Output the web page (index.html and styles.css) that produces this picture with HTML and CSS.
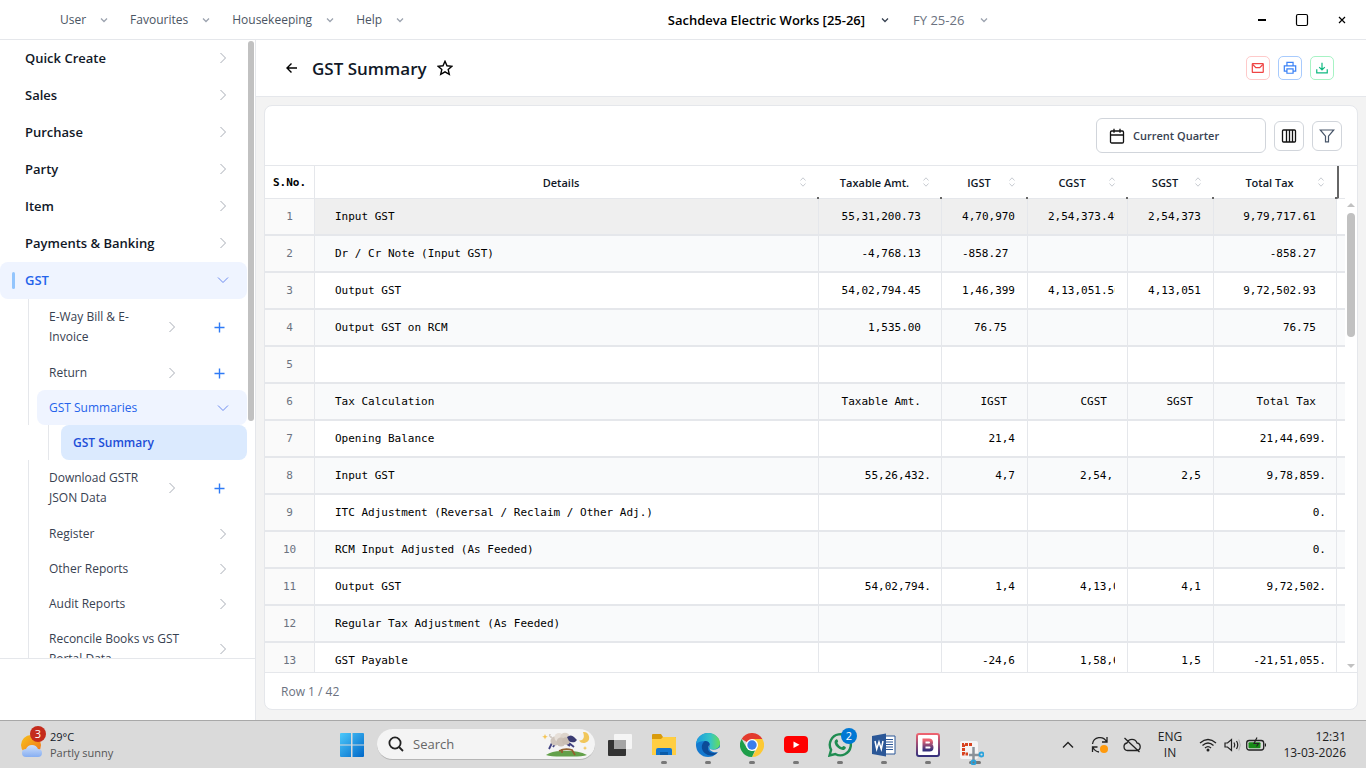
FILE: index.html
```html
<!DOCTYPE html>
<html lang="en">
<head>
  <meta charset="UTF-8">
  <title>GST Summary</title>
  <link rel="stylesheet" href="styles.css">
</head>
<body>

<!-- Shared icons -->
<svg class="sprite" aria-hidden="true">
  <symbol id="chev-right" viewBox="0 0 16 16"><path d="M5.5 3l5 5-5 5"/></symbol>
  <symbol id="chev-down" viewBox="0 0 16 16"><path d="M3 5.500l5 5 5-5"/></symbol>
  <symbol id="caret" viewBox="0 0 8 8"><path d="M1 2.500l3 3 3-3"/></symbol>
  <symbol id="plus" viewBox="0 0 16 16"><path d="M8.500 3.500v10M3.500 8.500h10"/></symbol>
  <symbol id="sort" viewBox="0 0 8 12"><path d="M1.500 4.500L4 1.800l2.500 2.700M1.500 7.500L4 10.200l2.500-2.700"/></symbol>
</svg>

<header class="titlebar">
  <nav class="menu">
    <button>User <svg class="caret"><use href="#caret"/></svg></button>
    <button>Favourites <svg class="caret"><use href="#caret"/></svg></button>
    <button>Housekeeping <svg class="caret"><use href="#caret"/></svg></button>
    <button>Help <svg class="caret"><use href="#caret"/></svg></button>
  </nav>
  <div class="menu company">
    <button class="firm">Sachdeva Electric Works [25-26] <svg class="caret"><use href="#caret"/></svg></button>
    <button class="year">FY 25-26 <svg class="caret"><use href="#caret"/></svg></button>
  </div>
  <div class="window-controls">
    <button aria-label="Minimize"><svg viewBox="0 0 20 20"><path d="M6 10h8" stroke-width="2"/></svg></button>
    <button aria-label="Maximize"><svg viewBox="0 0 20 20"><rect x="4.500" y="4.500" width="11" height="11" rx="1.500" stroke-width="1.200"/></svg></button>
    <button aria-label="Close"><svg viewBox="0 0 20 20"><path d="M7 7l6 6M13 7l-6 6" stroke-width="1.200"/></svg></button>
  </div>
</header>

<div class="workspace">
  <aside class="sidebar">
    <div class="sidebar-scroll">
      <nav class="side-nav">
        <button class="item">Quick Create <svg><use href="#chev-right"/></svg></button>
        <button class="item">Sales <svg><use href="#chev-right"/></svg></button>
        <button class="item">Purchase <svg><use href="#chev-right"/></svg></button>
        <button class="item">Party <svg><use href="#chev-right"/></svg></button>
        <button class="item">Item <svg><use href="#chev-right"/></svg></button>
        <button class="item">Payments &amp; Banking <svg><use href="#chev-right"/></svg></button>
        <button class="item open">GST <svg><use href="#chev-down"/></svg></button>

        <div class="branch">
          <div class="sub tall">
            <button class="sub-link"><span>E-Way Bill &amp; E-Invoice</span> <svg><use href="#chev-right"/></svg></button>
            <button class="add" aria-label="Add E-Way Bill"><svg><use href="#plus"/></svg></button>
          </div>
          <div class="sub">
            <button class="sub-link"><span>Return</span> <svg><use href="#chev-right"/></svg></button>
            <button class="add" aria-label="Add Return"><svg><use href="#plus"/></svg></button>
          </div>
          <div class="sub open">
            <button class="sub-link"><span>GST Summaries</span> <svg><use href="#chev-down"/></svg></button>
          </div>
        </div>
        <div class="leaf-branch">
          <a class="leaf" href="#">GST Summary</a>
        </div>
        <div class="branch">
          <div class="sub tall">
            <button class="sub-link"><span>Download GSTR JSON Data</span> <svg><use href="#chev-right"/></svg></button>
            <button class="add" aria-label="Add Download"><svg><use href="#plus"/></svg></button>
          </div>
          <div class="sub"><button class="sub-link"><span>Register</span> <svg><use href="#chev-right"/></svg></button></div>
          <div class="sub"><button class="sub-link"><span>Other Reports</span> <svg><use href="#chev-right"/></svg></button></div>
          <div class="sub"><button class="sub-link"><span>Audit Reports</span> <svg><use href="#chev-right"/></svg></button></div>
          <div class="sub tall"><button class="sub-link"><span>Reconcile Books vs GST Portal Data</span> <svg><use href="#chev-right"/></svg></button></div>
        </div>
      </nav>
      <div class="side-thumb"></div>
    </div>
    <div class="sidebar-foot"></div>
  </aside>

  <main class="main">
    <div class="page-head">
      <button class="back" aria-label="Back"><svg viewBox="0 0 16 16"><path d="M13 8H3M7.500 3.500L3 8l4.500 4.500"/></svg></button>
      <h1>GST Summary</h1>
      <button class="star" aria-label="Add to favourites"><svg viewBox="0 0 16 16"><path d="M8 1.300l2 4.500 4.900.5-3.700 3.300 1.100 4.800L8 11.900l-4.300 2.500 1.100-4.800L1.100 6.300 6 5.800z"/></svg></button>
      <div class="actions">
        <button class="mail" aria-label="Email"><svg viewBox="0 0 16 16"><rect x="1.500" y="3" width="12.500" height="10" rx=".5"/><path d="M2 4l3.500 3.500h4.500L13.500 4"/></svg></button>
        <button class="print" aria-label="Print"><svg viewBox="0 0 16 16"><path d="M4.500 5.500v-4h7v4M4.500 11.500h-3v-6h13v6h-3M4.500 9h7v5h-7z"/></svg></button>
        <button class="save" aria-label="Download"><svg viewBox="0 0 16 16"><path d="M8 2v8M4.800 7L8 10.200 11.200 7M2 9.500v4h12v-4"/></svg></button>
      </div>
    </div>

    <section class="card">
      <div class="toolbar">
        <button class="period"><svg viewBox="0 0 16 16"><rect x="1.500" y="3" width="13" height="12" rx="1.200"/><path d="M1.500 7h13M5 .8v4M11 .8v4"/></svg>Current Quarter</button>
        <button class="tool" aria-label="Columns"><svg viewBox="0 0 16 16"><rect x="1.500" y="2" width="13" height="12" rx="1"/><path d="M5.500 2v12M8.500 2v12M11.500 2v12"/></svg></button>
        <button class="tool filter" aria-label="Filter"><svg viewBox="0 0 16 16"><path d="M1.300 2h13.400L9.500 8.200v5.600h-3V8.200z"/></svg></button>
      </div>

      <div class="grid">
        <table>
          <colgroup>
            <col class="c-no"><col><col class="c-amt"><col class="c-igst"><col class="c-cgst"><col class="c-igst"><col class="c-amt"><col class="c-end">
          </colgroup>
          <thead>
            <tr>
              <th class="no">S.No.</th>
              <th>Details<svg><use href="#sort"/></svg></th>
              <th>Taxable Amt.<svg><use href="#sort"/></svg></th>
              <th>IGST<svg><use href="#sort"/></svg></th>
              <th>CGST<svg><use href="#sort"/></svg></th>
              <th>SGST<svg><use href="#sort"/></svg></th>
              <th>Total Tax<svg><use href="#sort"/></svg></th>
              <th class="end"></th>
            </tr>
          </thead>
          <tbody>
            <tr class="selected"><td>1</td><td>Input GST</td><td>55,31,200.73</td><td class="wide">4,70,970</td><td class="cut"><span>2,54,373.49</span></td><td class="wide">2,54,373</td><td>9,79,717.61</td><td></td></tr>
            <tr><td>2</td><td>Dr / Cr Note (Input GST)</td><td>-4,768.13</td><td>-858.27</td><td></td><td></td><td>-858.27</td><td></td></tr>
            <tr><td>3</td><td>Output GST</td><td>54,02,794.45</td><td class="wide">1,46,399</td><td class="cut"><span>4,13,051.56</span></td><td class="wide">4,13,051</td><td>9,72,502.93</td><td></td></tr>
            <tr><td>4</td><td>Output GST on RCM</td><td>1,535.00</td><td>76.75</td><td></td><td></td><td>76.75</td><td></td></tr>
            <tr><td>5</td><td></td><td></td><td></td><td></td><td></td><td></td><td></td></tr>
            <tr><td>6</td><td>Tax Calculation</td><td>Taxable Amt.</td><td>IGST</td><td>CGST</td><td>SGST</td><td>Total Tax</td><td></td></tr>
            <tr><td>7</td><td>Opening Balance</td><td></td><td class="wide">21,4</td><td></td><td></td><td class="point">21,44,699.</td><td></td></tr>
            <tr><td>8</td><td>Input GST</td><td class="point">55,26,432.</td><td class="wide">4,7</td><td class="cut short"><span>2,54,</span></td><td class="wide">2,5</td><td class="point">9,78,859.</td><td></td></tr>
            <tr><td>9</td><td>ITC Adjustment (Reversal / Reclaim / Other Adj.)</td><td></td><td></td><td></td><td></td><td class="point">0.</td><td></td></tr>
            <tr><td>10</td><td>RCM Input Adjusted (As Feeded)</td><td></td><td></td><td></td><td></td><td class="point">0.</td><td></td></tr>
            <tr><td>11</td><td>Output GST</td><td class="point">54,02,794.</td><td class="wide">1,4</td><td class="cut short"><span>4,13,0</span></td><td class="wide">4,1</td><td class="point">9,72,502.</td><td></td></tr>
            <tr><td>12</td><td>Regular Tax Adjustment (As Feeded)</td><td></td><td></td><td></td><td></td><td></td><td></td></tr>
            <tr><td>13</td><td>GST Payable</td><td></td><td class="wide">-24,6</td><td class="cut short"><span>1,58,6</span></td><td class="wide">1,5</td><td class="point">-21,51,055.</td><td></td></tr>
          </tbody>
        </table>
        <div class="grid-bar">
          <svg viewBox="0 0 8 4"><path d="M4 0l4 4H0z"/></svg>
          <div class="grid-thumb"></div>
          <svg viewBox="0 0 8 4"><path d="M0 0h8L4 4z"/></svg>
        </div>
      </div>

      <div class="card-foot">Row 1 / 42</div>
    </section>
  </main>
</div>

<footer class="taskbar">
  <div class="weather">
    <svg viewBox="0 0 26 30">
      <defs>
        <linearGradient id="sun" x1="0" y1="0" x2="1" y2="1"><stop offset="0" stop-color="#f7c21c"/><stop offset="1" stop-color="#f0701a"/></linearGradient>
        <linearGradient id="cloud" x1="0" y1="0" x2="0" y2="1"><stop offset="0" stop-color="#cfe0fa"/><stop offset="1" stop-color="#86aef2"/></linearGradient>
      </defs>
      <circle cx="11" cy="15" r="10" fill="url(#sun)"/>
      <path d="M6 27a4 4 0 0 1 0-8 6.500 6.500 0 0 1 12 0 4 4 0 0 1 0 8z" fill="url(#cloud)"/>
    </svg>
    <span class="badge">3</span>
    <div><div class="temp">29°C</div><div class="sky">Partly sunny</div></div>
  </div>

  <div class="apps">
    <button class="start" aria-label="Start">
      <svg viewBox="0 0 24 24">
        <defs><linearGradient id="win" gradientUnits="userSpaceOnUse" x1="0" y1="0" x2="24" y2="24"><stop offset="0" stop-color="#4cc9fb"/><stop offset="1" stop-color="#0067c8"/></linearGradient></defs>
        <path d="M0 1q0-1 1-1h10v11.500H0zM12.500 0H23q1 0 1 1v10.500H12.500zM0 12.500h11V24H1q-1 0-1-1zM12.500 12.500H24V23q0 1-1 1H12.500z" fill="url(#win)"/>
      </svg>
    </button>
    <label class="search">
      <svg class="lens" viewBox="0 0 16 16"><circle cx="7" cy="7" r="5.600"/><path d="M11 11l4 4"/></svg>
      <input type="text" placeholder="Search" aria-label="Search">
      <svg class="sheep" viewBox="0 0 48 26">
        <path d="M4 24q6-4 15-4 16-1 26 4-6 2-20 1.500Q10 26 4 24z" fill="#63a04a"/>
        <path d="M17 20q6-3 13-1l3 5M20 18v4" stroke="#93602f" stroke-width="1.800" fill="none"/>
        <path d="M10 12l-3 6M13 13l-2 3M27 12l5 4M25 13l3 2" stroke="#3f4080" stroke-width="1.800"/>
        <circle cx="13" cy="10" r="4.500" fill="#d0c6bd"/>
        <circle cx="17" cy="6.500" r="4.500" fill="#e6dfd8"/>
        <circle cx="23" cy="6.500" r="4.800" fill="#ddd4cb"/>
        <circle cx="19" cy="11" r="4.500" fill="#cdc2b8"/>
        <circle cx="24" cy="10" r="3.800" fill="#c9bdb2"/>
        <path d="M10 6Q7 7 8 3" stroke="#bdb1a6" fill="none"/>
        <path d="M25 6q4-3 7 0l3 3-2 2q-4 1-6-1z" fill="#3a3b72"/>
        <path d="M41 1a5.500 5.500 0 1 1-4 8.500q7 0 4-8.500z" fill="#f1c65a"/>
        <path d="M3 3l.8 2 2 .8-2 .8L3 8.600l-.8-2-2-.8 2-.8zM43 15l.6 1.500 1.500.6-1.500.6-.6 1.500-.6-1.500-1.500-.6 1.500-.6z" fill="#f4c350"/>
      </svg>
    </label>
    <button class="app idle" aria-label="Task view">
      <svg viewBox="0 0 24 24"><rect x="6" y="1" width="18" height="15" rx="1" fill="#f5f5f5"/><rect y="7" width="18" height="16" rx="1" fill="#333"/><path d="M6 7h12v9H6z" fill="#a5a5a5"/></svg>
    </button>
    <button class="app" aria-label="File Explorer">
      <svg viewBox="0 0 24 24"><path d="M0 2q0-1 1-1h8l2 3h12q1 0 1 1v6H0z" fill="#d99b0c"/><path d="M0 6h9l2-2h12q1 0 1 1v17H0z" fill="#ffce42"/><path d="M4 22v-5q0-2 2-2h12q2 0 2 2v5z" fill="#1476cf"/><path d="M8 22v-3h8v3z" fill="#0a5ba8"/></svg>
    </button>
    <button class="app" aria-label="Edge">
      <svg viewBox="0 0 24 24">
        <defs><linearGradient id="edge" x1="0" y1="0" x2="1" y2="0"><stop offset="0" stop-color="#1b9be0"/><stop offset=".6" stop-color="#35c5c5"/><stop offset="1" stop-color="#69dd57"/></linearGradient></defs>
        <circle cx="12" cy="12" r="12" fill="#1479cf"/>
        <path d="M0 11C1 4 6 0 12 0c7 0 12 5 12 10 0 4-3 6.500-7 6.500-3 0-4.500-1-3.500-2.500 1.500-3-.5-6-4.500-6-4 0-7 1-9 3z" fill="url(#edge)"/>
        <path d="M9 8c-6 4-3 14 6 14.500 3 0 5-1 7-3.500-7 3-13-2-8.500-6.500C14 9 11 8 9 8z" fill="#0c4c98"/>
        <path d="M13.500 11.500c-2 3 0 5 3.500 5.200 3 .2 5-.8 6.500-2.500l.5 2-2 3c-6 1-10.500-2.500-8.500-7.700z" fill="#dadada"/>
      </svg>
    </button>
    <button class="app" aria-label="Chrome">
      <svg viewBox="0 0 24 24"><path d="M12 12L1.600 6A12 12 0 0 1 22.400 6z" fill="#e33b2e"/><path d="M12 6h10.400A12 12 0 0 1 12 24l5.200-9z" fill="#fcc934"/><path d="M1.600 6l5.200 9L12 18l3-.5L12 24A12 12 0 0 1 1.600 6z" fill="#1e9e4a"/><circle cx="12" cy="12" r="6" fill="#fff"/><circle cx="12" cy="12" r="4.700" fill="#3b7ded"/></svg>
    </button>
    <button class="app" aria-label="YouTube">
      <svg viewBox="0 0 24 24"><rect y="3" width="24" height="17" rx="4" fill="#f00"/><path d="M9.500 8.500l6 3.200-6 3.200z" fill="#fff"/></svg>
    </button>
    <button class="app" aria-label="WhatsApp">
      <svg viewBox="0 0 24 24"><path d="M1.500 22.500l1.600-5.700A10.500 10.500 0 1 1 7.300 21z" fill="none" stroke="#1f8c51" stroke-width="2.400"/><path d="M8 6.500c1-.8 1.600 0 2 1.500.4 1-.6 1.300-.6 2 1 2 2.300 3.300 4.400 4.200.8 0 1.200-1.400 2-1.200 1.700.7 2.400 1.200 1.900 2.200-1 2.400-4 2-6.500.6C8.500 14 6.500 11.500 6.500 9q.2-1.800 1.500-2.500z" fill="#1f8c51"/></svg>
      <span class="badge blue">2</span>
    </button>
    <button class="app" aria-label="Word">
      <svg viewBox="0 0 24 24"><path d="M12 3h11v18H12z" fill="#fff" stroke="#2b5797"/><path d="M14 6.500h7M14 9h7M14 11.500h7M14 14h7M14 16.500h7" stroke="#2b5797" stroke-width="1.200"/><path d="M0 3l14-2.500v23L0 21z" fill="#2b5797"/><path d="M3 8l1.700 8L7 9l2.300 7L11 8" fill="none" stroke="#fff" stroke-width="1.500"/></svg>
    </button>
    <button class="app" aria-label="Busy">
      <svg viewBox="0 0 24 24">
        <defs><linearGradient id="busy" x1="0" y1="0" x2="0" y2="1"><stop offset="0" stop-color="#ee6470"/><stop offset="1" stop-color="#35307c"/></linearGradient></defs>
        <rect x="1" y="1" width="22" height="22" rx="2" fill="#fff" stroke="url(#busy)" stroke-width="2"/><path d="M8 7h5a2.400 2.400 0 0 1 0 5H8zM8 12h5.500a2.500 2.500 0 0 1 0 5H8z" fill="none" stroke="url(#busy)" stroke-width="3"/>
      </svg>
    </button>
    <button class="app low" aria-label="Snipping Tool">
      <svg viewBox="0 0 24 24"><rect width="18" height="18" rx="2" fill="#f4f4f4"/><path d="M12 3.500H3.500V13H8" fill="none" stroke="#d8431f" stroke-width="3" stroke-dasharray="3 1"/><path d="M13.500 6v14M9 14h10" stroke="#8b9299" stroke-width="2.500"/><circle cx="21.500" cy="13.500" r="2" fill="none" stroke="#29a3dd" stroke-width="1.800"/><circle cx="13.500" cy="21.500" r="2" fill="none" stroke="#29a3dd" stroke-width="1.800"/></svg>
    </button>
  </div>

  <div class="tray">
    <svg viewBox="0 0 20 20"><path d="M5 12.500l5-5 5 5" stroke-width="1.400"/></svg>
    <svg viewBox="0 0 20 20"><path d="M2.500 9a7.500 7.500 0 0 1 14-2.500M17 2v5h-5M2.500 17v-5h5M3 12.500q2 4 6 4.500" stroke-width="1.300"/><circle cx="14" cy="14" r="4" fill="#ff9a0d" stroke="none"/></svg>
    <svg viewBox="0 0 20 20"><path d="M5.500 15.500a3.800 3.800 0 0 1-.5-7.500 5.300 5.300 0 0 1 10 0 3.800 3.800 0 0 1 0 7.500zM2.500 3l15 14" stroke-width="1.300"/></svg>
    <div class="lang">ENG<br>IN</div>
    <div class="status">
      <svg viewBox="0 0 20 20"><path d="M2 8q8-7 16 0M4.500 10.500q5.500-5 11 0M7 13q3-2.800 6 0" stroke-width="1.300"/><circle cx="10" cy="15" r="1.500" fill="#222" stroke="none"/></svg>
      <svg viewBox="0 0 20 20"><path d="M3 8h2.500L9.500 4.500v11L5.500 12H3zM12 7.500q1.500 2.500 0 5M14.500 6q2.500 4 0 8" stroke-width="1.200"/><path d="M16.800 4.500q3 5.500 0 11" stroke="#aaa"/></svg>
      <svg viewBox="0 0 20 20"><rect x=".7" y="5.500" width="17" height="9.500" rx="2.500" stroke-width="1.300"/><path d="M19.500 8.500v3" stroke-width="1.300"/><rect x="2.500" y="7.200" width="12" height="6" rx="1" fill="#168a16" stroke="none"/><path d="M11 2.500L8 8.500h4.500l-2 3" stroke-width="1.200"/></svg>
    </div>
    <div class="clock">12:31<br>13-03-2026</div>
  </div>
</footer>

</body>
</html>
```
FILE: styles.css
```css
* {
  box-sizing: border-box;
}

body {
  margin: 0;
  height: 100vh;
  display: flex;
  flex-direction: column;
  overflow: hidden;
  font-family: "Open Sans", "Noto Sans", sans-serif;
  font-size: 13px;
  color: #111827;
  background-color: #fff;
}

button {
  font: inherit;
  color: inherit;
  background: none;
  border: none;
  padding: 0;
  text-align: left;
  cursor: pointer;
}

svg {
  width: 16px;
  height: 16px;
  flex: none;
  fill: none;
  stroke: currentColor;
}

.sprite {
  position: absolute;
  width: 0;
  height: 0;
}

/* Title bar */
.titlebar {
  display: flex;
  align-items: center;
  flex: none;
  height: 40px;
  padding: 0 14px 0 60px;
  border-bottom: 1px solid #e5e7eb;
}

.menu {
  display: flex;
  gap: 22px;
  font-size: 12px;
  color: #4b5563;
}

.menu button {
  display: flex;
  align-items: center;
  gap: 14px;
  white-space: nowrap;
}

.caret {
  width: 8px;
  height: 8px;
  stroke-width: 1.3;
  color: #9ca3af;
}

.company {
  gap: 24px;
  margin: 0 auto;
  font-size: 13px;
}

.company button {
  gap: 16px;
}

.firm {
  font-weight: 600;
  color: #000;
}

.firm .caret {
  color: #374151;
}

.year {
  color: #6b7280;
}

.window-controls {
  display: flex;
  gap: 20px;
}

.window-controls button {
  display: flex;
  color: #000;
}

.window-controls svg {
  width: 20px;
  height: 20px;
}

/* Sidebar */
.workspace {
  display: flex;
  flex: 1;
  min-height: 0;
}

.sidebar {
  display: flex;
  flex-direction: column;
  flex: none;
  width: 256px;
  border-right: 1px solid #e5e7eb;
}

.sidebar-scroll {
  display: flex;
  flex: 1;
  min-height: 0;
  overflow: hidden;
}

.sidebar-foot {
  flex: none;
  height: 62px;
  border-top: 1px solid #e5e7eb;
}

.side-nav {
  flex: 1;
  min-width: 0;
}

.side-thumb {
  width: 6px;
  height: 380px;
  margin: 1px 1px 0;
  border-radius: 3px;
  background-color: #c1c1c1;
}

.item {
  display: flex;
  align-items: center;
  justify-content: space-between;
  width: 100%;
  height: 37px;
  padding: 0 16px 1px 25px;
  font-weight: 600;
  border-radius: 8px;
}

.item svg,
.sub-link svg {
  color: #a8adb6;
}

.item.open {
  position: relative;
  color: #2563eb;
  background-color: #eff4ff;
}

.item.open svg,
.sub.open svg {
  color: #6b8af0;
}

.item.open::before {
  content: "";
  position: absolute;
  left: 12px;
  top: 10px;
  width: 3px;
  height: 17px;
  border-radius: 2px;
  background-color: #93c5fd;
}

.branch {
  margin-left: 28px;
  padding-left: 8px;
  border-left: 1px solid #e5e7eb;
}

.sub {
  display: flex;
  align-items: center;
  min-height: 35px;
  font-size: 12px;
  line-height: 20px;
  color: #374151;
  border-radius: 8px;
}

.sub.tall {
  min-height: 56px;
}

.sub.open {
  color: #2563eb;
  background-color: #eff4ff;
}

.sub-link {
  display: flex;
  align-items: center;
  justify-content: space-between;
  gap: 12px;
  flex: 1;
  padding: 0 16px 0 12px;
}

.add {
  display: flex;
  padding: 0 20px 0 15px;
  color: #2f7bf6;
}

.add svg {
  stroke-width: 1.4;
}

.leaf-branch {
  margin-left: 48px;
  padding-left: 12px;
  border-left: 1px solid #e5e7eb;
}

.leaf {
  display: block;
  padding: 0 12px;
  line-height: 35px;
  font-weight: 600;
  font-size: 12px;
  color: #1d4ed8;
  text-decoration: none;
  border-radius: 8px;
  background-color: #dbeafe;
}

/* Page */
.main {
  display: flex;
  flex-direction: column;
  flex: 1;
  min-width: 0;
  background-color: #f3f3f3;
}

.page-head {
  display: flex;
  align-items: center;
  flex: none;
  height: 57px;
  padding: 0 32px 0 28px;
  border-bottom: 1px solid #e5e7eb;
  background-color: #fff;
}

.page-head h1 {
  margin: 0 10px 0 12px;
  font-size: 17px;
  font-weight: 600;
}

.back,
.star {
  display: flex;
  color: #000;
}

.back svg,
.star svg {
  stroke-width: 1.4;
}

.actions {
  display: flex;
  gap: 8px;
  margin-left: auto;
}

.actions button {
  display: flex;
  align-items: center;
  justify-content: center;
  width: 24px;
  height: 24px;
  border: 1px solid;
  border-radius: 5px;
}

.actions svg {
  width: 14px;
  height: 14px;
  stroke-width: 1.4;
}

.actions .mail {
  color: #ef4444;
  border-color: #fecaca;
}

.actions .print {
  color: #3b82f6;
  border-color: #a8cbfd;
}

.actions .save {
  color: #10b981;
  border-color: #a7f3c4;
}

.card {
  display: flex;
  flex-direction: column;
  flex: 1;
  min-height: 0;
  margin: 8px 8px 10px;
  border: 1px solid #e5e7eb;
  border-radius: 8px;
  background-color: #fff;
}

.toolbar {
  display: flex;
  align-items: center;
  justify-content: flex-end;
  gap: 8px;
  flex: none;
  height: 60px;
  padding: 0 15px;
  border-bottom: 1px solid #e5e7eb;
}

.period {
  display: flex;
  align-items: center;
  gap: 8px;
  width: 170px;
  height: 35px;
  padding: 0 12px;
  font-size: 11px;
  font-weight: 600;
  color: #374151;
  border: 1px solid #d1d5db;
  border-radius: 6px;
}

.period svg,
.tool svg {
  color: #111;
  stroke-width: 1.3;
}

.tool {
  display: flex;
  align-items: center;
  justify-content: center;
  width: 30px;
  height: 30px;
  border: 1px solid #d1d5db;
  border-radius: 6px;
}

.tool.filter svg {
  color: #475569;
  stroke-width: 1.2;
}

/* Grid */
.grid {
  display: flex;
  flex: 1;
  min-height: 0;
  overflow: hidden;
}

table {
  flex: 1;
  min-width: 0;
  width: 100%;
  align-self: flex-start;
  table-layout: fixed;
  border-collapse: separate;
  border-spacing: 0;
}

.c-no { width: 50px; }
.c-amt { width: 123px; }
.c-igst { width: 86px; }
.c-cgst { width: 100px; }
.c-end { width: 8px; }

th {
  position: relative;
  height: 33px;
  padding: 0 12px 0 0;
  font-size: 11px;
  font-weight: 600;
  white-space: nowrap;
  border-bottom: 1px solid #e5e7eb;
}

th.no {
  padding: 0;
  font-family: "DejaVu Sans Mono", monospace;
  font-weight: bold;
  color: #000;
  border-right: 1px solid #e5e7eb;
}

th svg {
  position: absolute;
  right: 12px;
  top: 10px;
  width: 8px;
  height: 12px;
  color: #c8ccd2;
}

/* resize handles */
th + th:not(.end)::after {
  content: "";
  position: absolute;
  right: 0;
  bottom: -1px;
  width: 2px;
  height: 2px;
  background-color: #666;
}

th.end {
  padding: 0;
  border-left: 2px solid #666;
}

td {
  height: 37px;
  padding: 0 20px;
  overflow: hidden;
  font-family: "DejaVu Sans Mono", monospace;
  font-size: 11px;
  text-align: right;
  white-space: nowrap;
  color: #000;
  border-right: 1px solid #e5e7eb;
  border-bottom: 2px solid #e5e7eb;
}

td:nth-child(2) {
  text-align: left;
}

td:last-child {
  padding: 0;
  border-right: none;
}

tr:nth-child(even) td {
  background-color: #f9fafb;
}

tr.selected td {
  background-color: #efefef;
}

tr td:first-child {
  padding: 0;
  text-align: center;
  color: #6b7280;
  background-color: #fafafa;
}

tr.selected td:last-child {
  background-color: #fff;
}

td.wide {
  padding-right: 12px;
}

td.point {
  padding-right: 10px;
}

td.cut {
  padding-right: 12px;
  text-align: left;
}

td.cut.short {
  padding-left: 52px;
}

.cut span {
  display: block;
  overflow: hidden;
}

.grid-bar {
  display: flex;
  flex-direction: column;
  align-items: center;
  width: 12px;
  padding: 37px 0 4px;
}

.grid-bar svg {
  width: 8px;
  height: 4px;
  fill: #c1c1c1;
  stroke: none;
}

.grid-thumb {
  width: 8px;
  height: 124px;
  margin: 6px 0 auto;
  border-radius: 4px;
  background-color: #c1c1c1;
}

.card-foot {
  flex: none;
  height: 37px;
  padding-left: 16px;
  font-size: 12px;
  line-height: 37px;
  color: #6b7280;
  border-top: 1px solid #e5e7eb;
}

/* Taskbar */
.taskbar {
  display: flex;
  flex: none;
  height: 48px;
  border-top: 1px solid #a8a8a8;
  background-color: #dadada;
}

.weather {
  position: relative;
  display: flex;
  align-items: center;
  gap: 4px;
  width: 340px;
  padding-left: 20px;
  font-size: 11px;
  line-height: 16px;
}

.weather svg,
.app svg,
.start svg,
.sheep {
  stroke: none;
}

.weather svg {
  width: 26px;
  height: 30px;
}

.sky {
  color: #555;
}

.badge {
  position: absolute;
  left: 30px;
  top: 5px;
  width: 16px;
  height: 16px;
  font-size: 11px;
  line-height: 16px;
  text-align: center;
  color: #fff;
  border-radius: 50%;
  background-color: #c42b1c;
}

.badge.blue {
  left: 13px;
  top: -5px;
  background-color: #0078d4;
}

.apps {
  display: flex;
  align-items: center;
  gap: 20px;
}

.start svg,
.app svg {
  display: block;
  width: 24px;
  height: 24px;
}

.search {
  display: flex;
  align-items: center;
  width: 218px;
  height: 31px;
  margin: 0 -7px;
  padding: 0 5px 0 11px;
  border-radius: 16px;
  border-bottom: 1px solid #b5b5b5;
  background-color: #f4f4f4;
}

.search input {
  flex: 1;
  min-width: 0;
  padding: 0 0 0 9px;
  font: inherit;
  border: none;
  outline: none;
  background: none;
}

.search input::placeholder {
  color: #666;
}

.lens {
  color: #222;
  stroke-width: 1.8;
}

.sheep {
  width: 48px;
  height: 26px;
}

.app {
  position: relative;
}

/* running indicator */
.app:not(.idle)::after {
  content: "";
  position: absolute;
  left: 9px;
  top: 28px;
  width: 6px;
  height: 3px;
  border-radius: 2px;
  background-color: #777;
}

.app.low svg {
  position: relative;
  top: 8px;
  z-index: 1;
}

.app.low::after {
  width: 12px;
}

.tray {
  display: flex;
  align-items: center;
  gap: 12px;
  margin-left: auto;
  padding-right: 20px;
  font-size: 12px;
  line-height: 16px;
  color: #222;
}

.tray svg {
  width: 20px;
  height: 20px;
}

.lang {
  width: 32px;
  text-align: center;
}

.status {
  display: flex;
  gap: 4px;
}

.clock {
  width: 68px;
  text-align: right;
  white-space: nowrap;
}
```
